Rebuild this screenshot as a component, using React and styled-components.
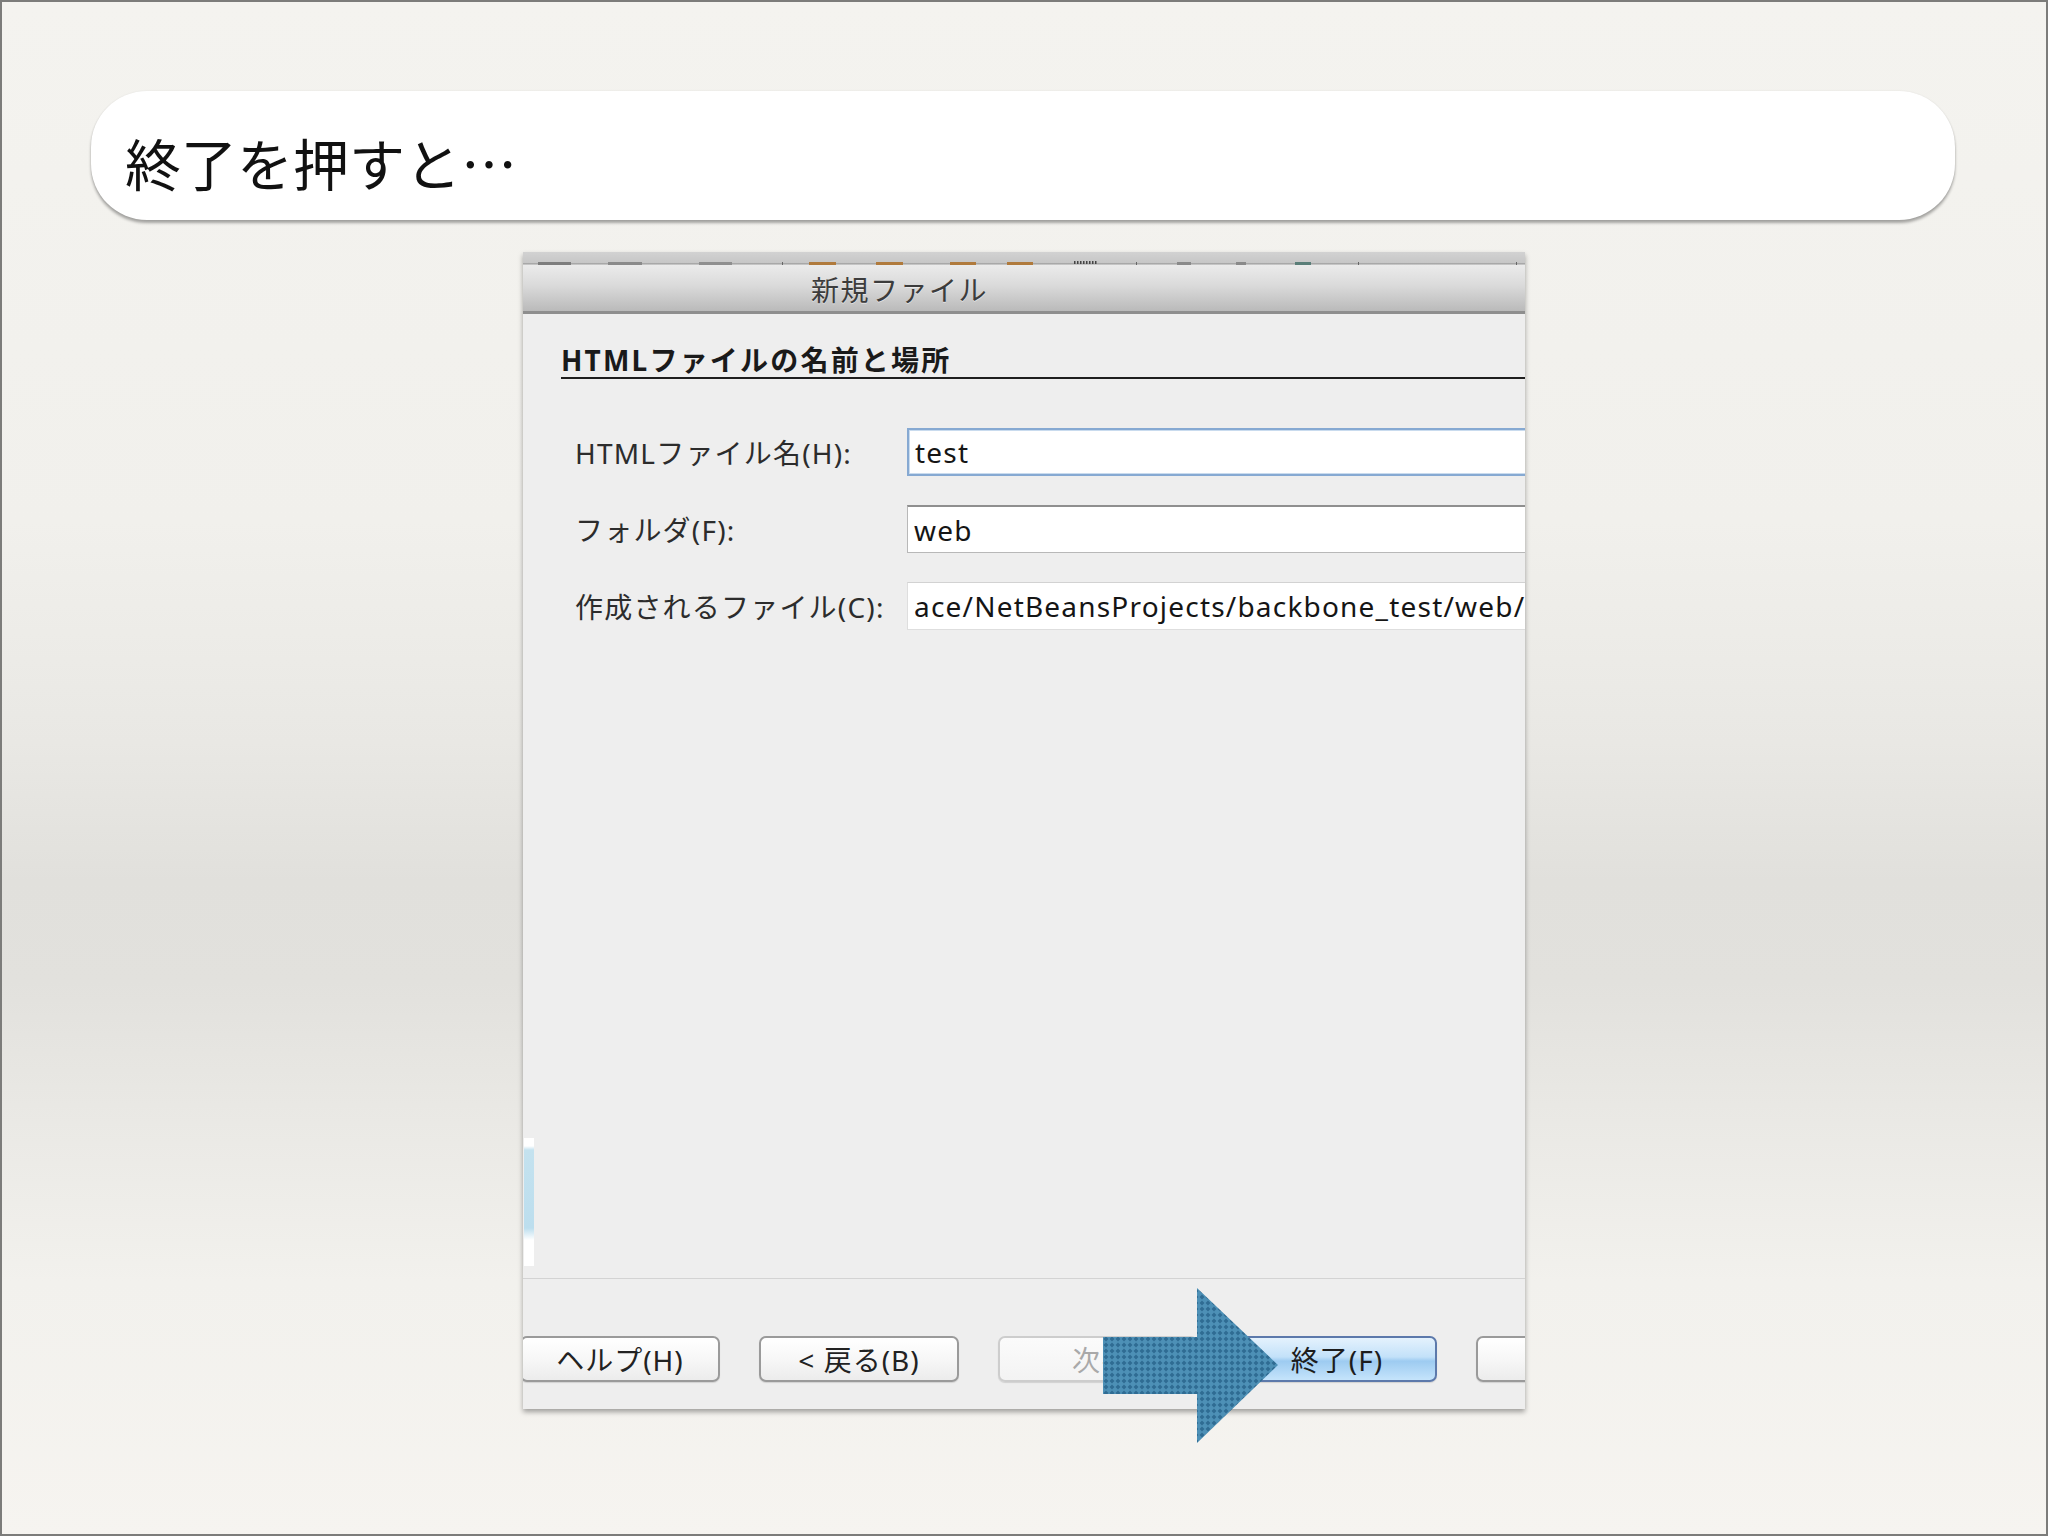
import styled, { createGlobalStyle } from "styled-components";

const GlobalStyle = createGlobalStyle`
  html, body {
    margin: 0;
    padding: 0;
  }
  body {
    font-family: "Noto Sans", "Noto Sans CJK JP", sans-serif;
  }
`;

const dashes = [
  [15, 33, "#7d7d7d"], [85, 34, "#8a8a8a"], [176, 33, "#8f8f8f"], [259, 1, "#666"],
  [286, 27, "#b07a3c"], [353, 27, "#b07a3c"], [427, 26, "#b07a3c"], [484, 26, "#b07a3c"],
  [613, 1, "#666"], [654, 14, "#8a8a8a"], [713, 10, "#8a8a8a"], [772, 16, "#5a7e78"],
  [835, 1, "#666"], [993, 1, "#666"],
];

function ToolbarRemnant() {
  return (
    <svg width="1002" height="13" viewBox="0 0 1002 13">
      <defs>
        <linearGradient id="strip" x1="0" y1="0" x2="0" y2="1">
          <stop offset="0" stopColor="#d2d2d2" />
          <stop offset="1" stopColor="#c4c4c4" />
        </linearGradient>
      </defs>
      <rect width="1002" height="13" fill="url(#strip)" />
      <line x1="0" y1="11.5" x2="1002" y2="11.5" stroke="#a8a8a8" strokeWidth="1" />
      {dashes.map(([x, w, c], i) => (
        <rect key={i} x={x} y="10" width={w} height="3" fill={c} />
      ))}
      {[0, 3, 6, 9, 12, 15, 18, 21].map((d) => (
        <rect key={d} x={551 + d} y="9" width="1.5" height="3" fill="#444" />
      ))}
    </svg>
  );
}

function Arrow() {
  return (
    <ArrowSvg width="176" height="156" viewBox="0 0 176 156">
      <defs>
        <pattern id="dots" width="6" height="6" patternUnits="userSpaceOnUse">
          <rect width="6" height="6" fill="#4d90b6" />
          <polygon points="3,0.5 5.5,3 3,5.5 0.5,3" fill="#2f6c93" />
        </pattern>
      </defs>
      <polygon
        points="0,49 94,49 94,0 175,77 94,155 94,106 0,106"
        fill="url(#dots)"
      />
    </ArrowSvg>
  );
}

function App() {
  return (
    <>
      <GlobalStyle />
      <Slide>
        <TitleBox>終了を押すと…</TitleBox>

        <DialogWrap>
          <Dialog>
            <ToolbarRemnant />
            <TitleBar>新規ファイル</TitleBar>

            <Content>
              <EdgeStrip />
              <Heading>HTMLファイルの名前と場所</Heading>

              <Form>
                <Label>HTMLファイル名(H):</Label>
                <Field $variant="focus">test</Field>
                <Label>フォルダ(F):</Label>
                <Field>web</Field>
                <Label>作成されるファイル(C):</Label>
                <Field $variant="readonly">
                  ace/NetBeansProjects/backbone_test/web/test.html
                </Field>
              </Form>

              <Spacer />

              <Footer>
                <Button>ヘルプ(H)</Button>
                <Button>&lt; 戻る(B)</Button>
                <Button $variant="disabled">次へ(N) &gt;</Button>
                <Button $variant="default">終了(F)</Button>
                <Button>取消し</Button>
              </Footer>
            </Content>
          </Dialog>
          <Arrow />
        </DialogWrap>
      </Slide>
    </>
  );
}

const Slide = styled.div`
  box-sizing: border-box;
  width: 2048px;
  height: 1536px;
  border: 2px solid #7c7c7a;
  padding: 89px 0 0 89px;
  overflow: hidden;
  display: flex;
  flex-direction: column;
  align-items: flex-start;
  background: linear-gradient(
    to bottom,
    #f4f3ef 0px,
    #f1f0ec 520px,
    #e9e8e4 740px,
    #e1e0dc 880px,
    #e2e1dd 980px,
    #eae9e5 1120px,
    #f2f1ed 1280px,
    #f6f4f0 1536px
  );
`;

const TitleBox = styled.div`
  box-sizing: border-box;
  width: 1864px;
  height: 129px;
  border-radius: 56px;
  background: #ffffff;
  box-shadow: 0 3px 3px rgba(0, 0, 0, 0.32), 0 0 2px rgba(0, 0, 0, 0.08);
  display: flex;
  align-items: center;
  padding: 12px 0 0 34px;
  font-family: "Noto Sans CJK JP", sans-serif;
  font-size: 56px;
  font-weight: 400;
  color: #111;
`;

const DialogWrap = styled.div`
  position: relative;
  margin: 32px 0 0 432px;
`;

const Dialog = styled.div`
  width: 1002px;
  height: 1157px;
  display: flex;
  flex-direction: column;
  overflow: hidden;
  background: #ededed;
  box-shadow: 0 3px 5px rgba(0, 0, 0, 0.35);

  & > svg {
    display: block;
    flex: none;
  }
`;

const TitleBar = styled.div`
  flex: none;
  box-sizing: border-box;
  height: 49px;
  padding: 2px 0 0 288px;
  display: flex;
  align-items: center;
  background: linear-gradient(to bottom, #ebebeb 0%, #dadada 45%, #bababa 100%);
  border-bottom: 3px solid #8e8e8e;
  font-family: "Noto Sans CJK JP", sans-serif;
  font-size: 28px;
  letter-spacing: 1.5px;
  color: #3c3c3c;
  text-shadow: 0 1px 0 rgba(255, 255, 255, 0.5);
`;

const Content = styled.div`
  position: relative;
  flex: 1;
  display: flex;
  flex-direction: column;
  background: #eeeeee;
`;

const EdgeStrip = styled.div`
  position: absolute;
  left: 1px;
  top: 824px;
  width: 10px;
  height: 128px;
  background: linear-gradient(
    to bottom,
    #ffffff 0px,
    #ffffff 8px,
    #c4e2ef 12px,
    #bcdeee 90px,
    #ffffff 102px,
    #ffffff 128px
  );
`;

const Heading = styled.div`
  margin: 30px 0 0 38px;
  height: 33px;
  line-height: 33px;
  border-bottom: 2px solid #1e1e1e;
  font-family: "Noto Sans", "Noto Sans CJK JP", sans-serif;
  font-size: 28px;
  font-weight: 700;
  letter-spacing: 2.2px;
  color: #1a1a1a;
`;

const Form = styled.div`
  display: grid;
  grid-template-columns: 332px 1fr;
  grid-auto-rows: 48px;
  row-gap: 29px;
  margin: 49px -14px 0 52px;
`;

const Label = styled.div`
  display: flex;
  align-items: center;
  font-family: "Noto Sans", "Noto Sans CJK JP", sans-serif;
  font-size: 28px;
  letter-spacing: 1.2px;
  color: #2c2c2c;
  white-space: nowrap;
`;

const fieldBorders = {
  focus: "border: 2px solid #86a9d2; box-shadow: inset 0 0 0 1px #c9dbee;",
  readonly: "border: 1px solid #dedede; border-top-color: #d2d2d2;",
  normal: "border: 1px solid #b8b8b8; border-top: 2px solid #8f8f8f;",
};

const Field = styled.div`
  box-sizing: border-box;
  display: flex;
  align-items: center;
  padding: 0 6px;
  background: #ffffff;
  overflow: hidden;
  white-space: nowrap;
  font-family: "Noto Sans", sans-serif;
  font-size: 28px;
  letter-spacing: 1.2px;
  color: #151515;
  ${(p) => fieldBorders[p.$variant || "normal"]}
`;

const Spacer = styled.div`
  flex: 1;
`;

const Footer = styled.div`
  flex: none;
  height: 131px;
  box-sizing: border-box;
  border-top: 1px solid #d3d3d3;
  padding: 57px 0 0 0;
  margin-left: -3px;
  display: flex;
  gap: 39px;
`;

const buttonLooks = {
  normal: `
    background: linear-gradient(to bottom, #ffffff 0%, #f7f7f7 50%, #ececec 100%);
    border: 2px solid #9a9a9a;
    color: #222;
    justify-content: center;
  `,
  disabled: `
    background: linear-gradient(to bottom, #fbfbfb 0%, #f3f3f3 100%);
    border: 2px solid #cdcdcd;
    color: #a9a9a9;
    justify-content: flex-start;
    padding-left: 72px;
  `,
  default: `
    background: linear-gradient(
      to bottom,
      #e4f2fd 0%,
      #c3e1f9 45%,
      #9dcbf1 55%,
      #c5e4fb 100%
    );
    border: 2px solid #5c79ab;
    color: #1d1d1d;
    justify-content: center;
  `,
};

const Button = styled.div`
  flex: none;
  box-sizing: border-box;
  width: 200px;
  height: 46px;
  border-radius: 7px;
  display: flex;
  align-items: center;
  overflow: hidden;
  font-family: "Noto Sans", "Noto Sans CJK JP", sans-serif;
  font-size: 28px;
  letter-spacing: 1px;
  white-space: nowrap;
  box-shadow: 0 1px 1px rgba(0, 0, 0, 0.12);
  ${(p) => buttonLooks[p.$variant || "normal"]}
`;

const ArrowSvg = styled.svg`
  position: absolute;
  left: 580px;
  top: 1036px;
`;

export default App;
